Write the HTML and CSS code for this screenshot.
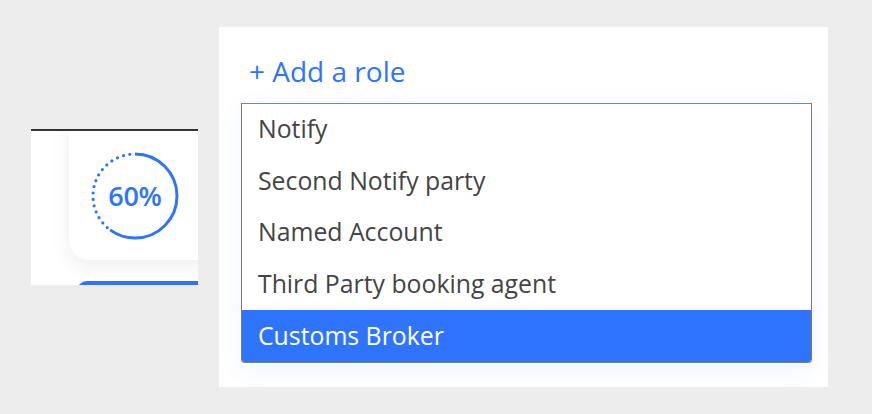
FILE: index.html
```html
<!DOCTYPE html>
<html>
<head>
<meta charset="utf-8">
<link rel="stylesheet" href="styles.css">
</head>
<body>
<div class="stage">
  <div class="left-panel">
    <div class="card">
      <div class="gauge">
        <svg width="90" height="90" viewBox="0 0 90 90">
          <path d="M20.31 78.98 A42 42 0 0 1 45 3" fill="none" stroke="#2e74ff" stroke-width="3.2" stroke-linecap="round" stroke-dasharray="0 6.4" stroke-dashoffset="-4"/>
          <circle cx="45" cy="45" r="42" fill="none" stroke="#2e74ff" stroke-width="3" stroke-dasharray="158.3 300" transform="rotate(-90 45 45)"/>
        </svg>
        <span class="gauge-label">60%</span>
      </div>
    </div>
    <div class="bar"></div>
  </div>
  <div class="right-panel">
    <div class="add-role">+ Add a role</div>
    <ul class="listbox">
      <li class="option">Notify</li>
      <li class="option">Second Notify party</li>
      <li class="option">Named Account</li>
      <li class="option">Third Party booking agent</li>
      <li class="option selected">Customs Broker</li>
    </ul>
  </div>
</div>
</body>
</html>
```

FILE: styles.css
```css
html, body {
  margin: 0;
  padding: 0;
  background: #ededed;
  font-family: "Open Sans", "Noto Sans", sans-serif;
}
.stage {
  display: flex;
  align-items: flex-start;
  width: 872px;
  height: 414px;
  overflow: hidden;
}
.left-panel {
  margin-top: 129px;
  margin-left: 31px;
  width: 167px;
  height: 154px;
  background: #fff;
  border-top: 2px solid #333;
  overflow: hidden;
  display: flex;
  flex-direction: column;
}
.card {
  margin-left: 38px;
  margin-top: -20px;
  width: 200px;
  height: 149px;
  flex: none;
  border-radius: 20px;
  background: #fff;
  box-shadow: 0 6px 22px rgba(0, 0, 0, 0.07);
  display: flex;
  align-items: flex-end;
  padding-left: 21px;
  box-sizing: border-box;
  padding-bottom: 19px;
}
.gauge {
  position: relative;
  width: 90px;
  height: 90px;
}
.gauge svg {
  display: block;
}
.gauge-label {
  position: absolute;
  inset: 0;
  display: flex;
  align-items: center;
  justify-content: center;
  color: #2e74ff;
  font-size: 27px;
  font-weight: 600;
  letter-spacing: -0.3px;
  padding-bottom: 2px;
}
.bar {
  margin-top: 21px;
  margin-left: 46px;
  height: 10px;
  flex: none;
  background: #2e74ff;
  border-radius: 10px 0 0 0;
}
.right-panel {
  margin-top: 27px;
  margin-left: 21px;
  width: 609px;
  height: 360px;
  background: #fff;
  box-sizing: border-box;
  padding: 25px 16px 0 22px;
}
.add-role {
  color: #2e74ff;
  font-size: 28px;
  line-height: 38px;
  padding-left: 8px;
}
.listbox {
  list-style: none;
  margin: 13px 0 0 0;
  padding: 0;
  width: 571px;
  box-sizing: border-box;
  border: 1px solid #7a7a7a;
  border-top: 1px solid #4d8af7;
  border-radius: 0 0 4px 4px;
  overflow: hidden;
  background: #fff;
  box-shadow: 0 6px 24px rgba(70, 100, 220, 0.08);
}
.option {
  height: 51.6px;
  box-sizing: border-box;
  display: flex;
  align-items: center;
  padding: 0 0 3px 16px;
  font-size: 24.8px;
  color: #444;
}
.option.selected {
  background: #2e74ff;
  color: #fff;
}
```
